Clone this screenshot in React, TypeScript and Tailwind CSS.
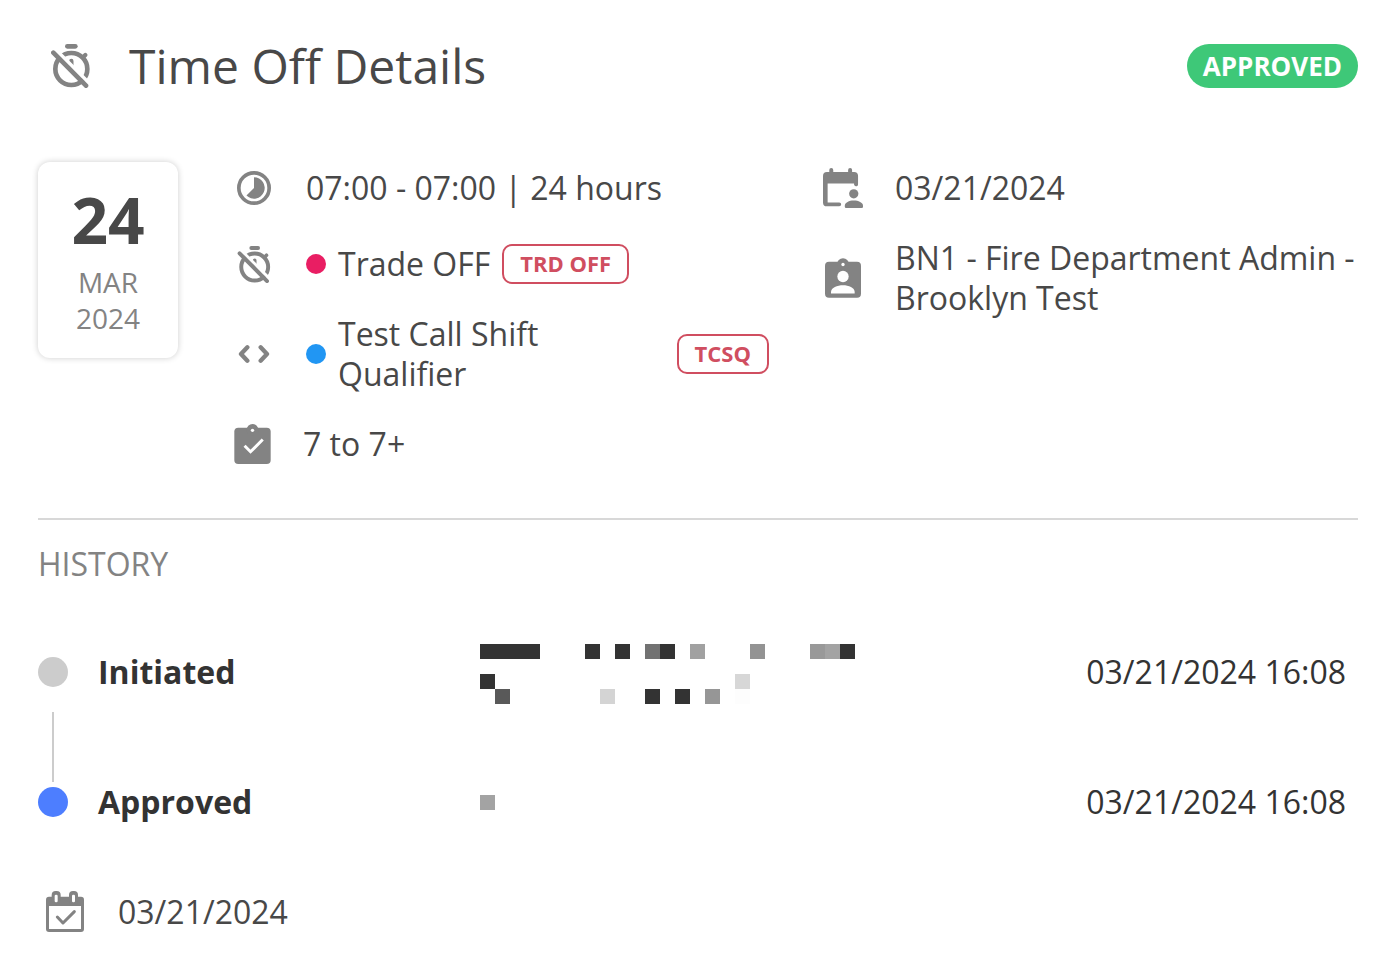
import type { ReactNode } from "react";

const TimerOffIcon = ({ className }: { className: string }) => (
  <svg viewBox="0 0 117 132" className={className} fill="none" strokeLinecap="round" aria-hidden="true">
    <rect x="42" y="0" width="38" height="14" rx="7" fill="#838383" />
    <circle cx="61" cy="75" r="48" stroke="#838383" strokeWidth="14" />
    <path d="M97 39l6-6M61 51v18" stroke="#838383" strokeWidth="13" />
    <path d="M16 19l104 104" stroke="#fff" strokeWidth="11" />
    <path d="M7 26l98 99" stroke="#838383" strokeWidth="14" />
  </svg>
);

const TimelapseIcon = () => (
  <svg viewBox="0 0 102 102" className="w-[34px] h-[34px]" aria-hidden="true">
    <circle cx="51" cy="51" r="45.5" fill="none" stroke="#838383" strokeWidth="11" />
    <path d="M51 51V19a32 32 0 1 1-22.6 54.6z" fill="#838383" />
  </svg>
);

const CodeIcon = () => (
  <svg viewBox="0 0 92 54" className="w-[32px] h-[18px]" fill="none" stroke="#838383" strokeWidth="13" strokeLinecap="round" strokeLinejoin="round" aria-hidden="true">
    <path d="M26 7L7 27l19 20M66 7l19 20-19 20" />
  </svg>
);

const TaskIcon = () => (
  <svg viewBox="0 0 110 121" className="w-[37px] h-[40px] shrink-0" fill="#838383" aria-hidden="true">
    <rect y="11" width="110" height="110" rx="12" />
    <circle cx="55" cy="18" r="18" />
    <circle cx="55" cy="19" r="5" fill="#fff" />
    <path d="M31 66l18 18 37-37" fill="none" stroke="#fff" strokeWidth="9" />
  </svg>
);

const CalendarUserIcon = () => (
  <svg viewBox="0 0 121 121" className="w-[40px] h-[40px]" fill="#838383" aria-hidden="true">
    <path d="M12 12h7V6a6 6 0 0 1 12 0v6h45V6a6 6 0 0 1 12 0v6h6a12 12 0 0 1 12 12v23a6 6 0 0 1-12 4V47H14v57h35a6 6 0 0 1 0 12H12a12 12 0 0 1-12-12V24a12 12 0 0 1 12-12z" />
    <circle cx="93" cy="78" r="14" />
    <path d="M66 114c0-10 13-16 27-16s28 6 28 16v3q0 4-4 4H70q-4 0-4-4z" />
  </svg>
);

const BadgeIcon = () => (
  <svg viewBox="0 0 108 119" className="w-[36px] h-[40px]" fill="#838383" aria-hidden="true">
    <rect y="11" width="108" height="108" rx="12" />
    <circle cx="54" cy="18" r="18" />
    <g fill="#fff">
      <circle cx="54" cy="19" r="5" />
      <circle cx="54" cy="55" r="17" />
      <path d="M18 106v-5c0-13 19-20 36-20s35 7 35 20v5z" />
    </g>
  </svg>
);

const CalendarCheckIcon = () => (
  <svg viewBox="0 0 114 123" className="w-[38px] h-[41px]" aria-hidden="true">
    <rect y="17" width="114" height="106" rx="9" fill="#838383" />
    <rect x="17" width="27" height="40" rx="12" fill="#838383" />
    <rect x="69" width="27" height="40" rx="12" fill="#838383" />
    <g fill="#fff">
      <rect x="26" y="11" width="9" height="23" rx="4" />
      <rect x="78" y="11" width="9" height="23" rx="4" />
      <rect x="9" y="45" width="96" height="69" />
    </g>
    <path d="M34 78l17 18 34-34" fill="none" stroke="#838383" strokeWidth="9" strokeLinecap="round" strokeLinejoin="round" />
  </svg>
);

// [column, row, colour] of each block of a masked name
type Cell = [number, number, string];

const maskedInitiator: Cell[] = [
  [0, 0, "#333"], [1, 0, "#333"], [2, 0, "#333"], [3, 0, "#333"],
  [7, 0, "#333"], [9, 0, "#333"], [11, 0, "#727272"], [12, 0, "#333"],
  [14, 0, "#a1a1a1"], [18, 0, "#939393"], [22, 0, "#999"], [23, 0, "#a3a3a3"], [24, 0, "#333"],
  [0, 2, "#333"], [17, 2, "#d7d7d7"],
  [1, 3, "#595959"], [8, 3, "#d4d4d4"], [11, 3, "#333"], [13, 3, "#333"], [15, 3, "#969696"], [17, 3, "#fdfdfd"],
];
const maskedApprover: Cell[] = [[0, 0, "#a3a3a3"]];

const history = [
  { label: "Initiated", color: "bg-[#cccccc]", name: maskedInitiator, rows: 4, align: "self-end", date: "03/21/2024 16:08" },
  { label: "Approved", color: "bg-[#4d7eff]", name: maskedApprover, rows: 1, align: "self-center", date: "03/21/2024 16:08" },
];

function MaskedName({ cells, rows }: { cells: Cell[]; rows: number }) {
  return (
    <svg width="375" height={rows * 15} shapeRendering="crispEdges" aria-hidden="true">
      {cells.map(([col, row, fill]) => (
        <rect key={`${col}-${row}`} x={col * 15} y={row * 15} width="15" height="15" fill={fill} />
      ))}
    </svg>
  );
}

function Row({ icon, children, className = "" }: { icon: ReactNode; children: ReactNode; className?: string }) {
  return (
    <div className={`flex items-center gap-8 ${className}`}>
      <div className="flex w-10 shrink-0 justify-center">{icon}</div>
      <div className="flex grow items-center gap-3">{children}</div>
    </div>
  );
}

function Tag({ children }: { children: ReactNode }) {
  return (
    <span className="shrink-0 rounded-[10px] border-2 border-[#d04e60] px-4 pb-0.5 text-[22px] leading-[34px] font-bold text-[#d04e60]">
      {children}
    </span>
  );
}

export default function App() {
  return (
    <main className="min-h-screen bg-white px-[38px] pt-9 pb-10 font-['Open_Sans','Noto_Sans',sans-serif] text-[32px] leading-10 text-[#484848]">
      <header className="flex items-center justify-between">
        <div className="flex items-center gap-[39px] pl-[13px]">
          <TimerOffIcon className="w-[39px] h-[44px]" />
          <h1 className="text-[48px] leading-[60px]">Time Off Details</h1>
        </div>
        <span className="rounded-full bg-[#3ec878] px-4 text-[26px] leading-[44px] font-bold text-white">APPROVED</span>
      </header>

      <section className="mt-[66px] flex items-start gap-14">
        <div className="flex h-[196px] w-[140px] shrink-0 flex-col items-center rounded-xl pt-5 text-[28px] leading-9 text-[#838383] shadow-[0_0_6px_rgba(0,0,0,0.2)]">
          <span className="mb-1.5 text-[64px] leading-[76px] font-bold text-[#484848]">24</span>
          <span>MAR</span>
          <span>2024</span>
        </div>
        <div className="grid grow grid-cols-2 gap-x-[54px]">
          <div className="flex flex-col gap-[30px]">
            <Row icon={<TimelapseIcon />} className="h-[52px]">07:00 - 07:00 | 24 hours</Row>
            <Row icon={<TimerOffIcon className="w-[34px] h-[37px]" />}>
              <span className="size-5 shrink-0 rounded-full bg-[#e91e63]" />
              <span>Trade OFF</span>
              <Tag>TRD OFF</Tag>
            </Row>
            <Row icon={<CodeIcon />}>
              <span className="size-5 shrink-0 rounded-full bg-[#2196f3]" />
              <span className="grow">Test Call Shift Qualifier</span>
              <Tag>TCSQ</Tag>
            </Row>
            <div className="flex items-center gap-8">
              <TaskIcon />
              <span>7 to 7+</span>
            </div>
          </div>
          <div className="flex flex-col gap-6">
            <Row icon={<CalendarUserIcon />} className="h-[52px]">03/21/2024</Row>
            <Row icon={<BadgeIcon />}>BN1 - Fire Department Admin - Brooklyn Test</Row>
          </div>
        </div>
      </section>

      <hr className="mt-[54px] border-t-2 border-[#d8d8d8]" />

      <section className="text-[#333333]">
        <h2 className="mt-6 text-[#838383]">HISTORY</h2>
        <ol className="mt-14">
          {history.map((item, i) => (
            <li key={item.label}>
              {i > 0 && <div className="mt-2 -mb-3 ml-[14px] h-[70px] w-0.5 bg-[#cccccc]" />}
              <div className="flex h-16 items-center pr-3">
                <span className={`size-[30px] shrink-0 rounded-full ${item.color}`} />
                <strong className="w-[412px] shrink-0 pl-[30px]">{item.label}</strong>
                <span className={`grow ${item.align}`}><MaskedName cells={item.name} rows={item.rows} /></span>
                <time className="whitespace-nowrap">{item.date}</time>
              </div>
            </li>
          ))}
        </ol>
      </section>

      <footer className="mt-[57px] flex items-center gap-[34px] pl-2">
        <CalendarCheckIcon />
        <span>03/21/2024</span>
      </footer>
    </main>
  );
}
